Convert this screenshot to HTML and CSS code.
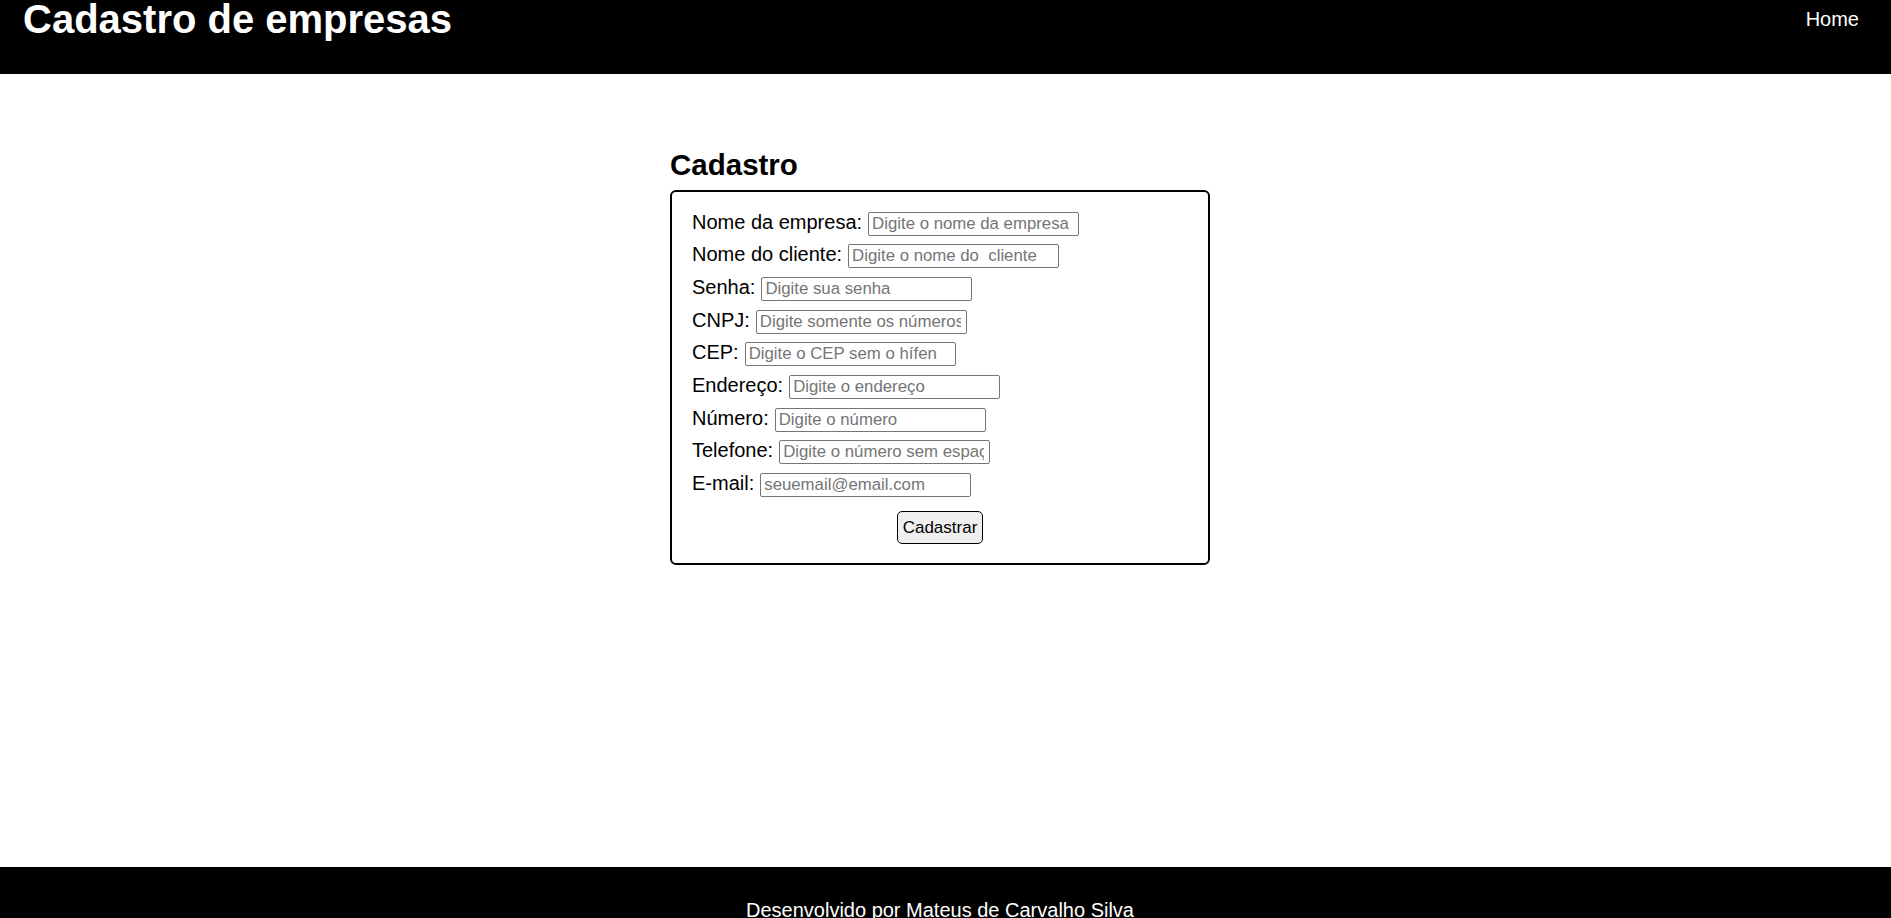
FILE: index.html
```html
<!DOCTYPE html>
<html lang="pt-BR">
<head>
    <meta charset="UTF-8">
    <meta name="viewport" content="width=device-width, initial-scale=1.0">
    <title>Cadastro de empresas</title>
    <link rel="stylesheet" href="styles.css">
</head>
<body>
    <header class="topo">
        <h1>Cadastro de empresas</h1>
        <nav>
            <a href="#">Home</a>
        </nav>
    </header>

    <main class="conteudo">
        <section class="cadastro">
            <h2>Cadastro</h2>
            <form class="formulario">
                <div class="campo">
                    <label for="empresa">Nome da empresa:</label>
                    <input type="text" id="empresa" placeholder="Digite o nome da empresa">
                </div>
                <div class="campo">
                    <label for="cliente">Nome do cliente:</label>
                    <input type="text" id="cliente" placeholder="Digite o nome do  cliente">
                </div>
                <div class="campo">
                    <label for="senha">Senha:</label>
                    <input type="password" id="senha" placeholder="Digite sua senha">
                </div>
                <div class="campo">
                    <label for="cnpj">CNPJ:</label>
                    <input type="text" id="cnpj" placeholder="Digite somente os números">
                </div>
                <div class="campo">
                    <label for="cep">CEP:</label>
                    <input type="text" id="cep" placeholder="Digite o CEP sem o hífen">
                </div>
                <div class="campo">
                    <label for="endereco">Endereço:</label>
                    <input type="text" id="endereco" placeholder="Digite o endereço">
                </div>
                <div class="campo">
                    <label for="numero">Número:</label>
                    <input type="text" id="numero" placeholder="Digite o número">
                </div>
                <div class="campo">
                    <label for="telefone">Telefone:</label>
                    <input type="text" id="telefone" placeholder="Digite o número sem espaços">
                </div>
                <div class="campo">
                    <label for="email">E-mail:</label>
                    <input type="email" id="email" placeholder="seuemail@email.com">
                </div>
                <button type="submit">Cadastrar</button>
            </form>
        </section>
    </main>

    <footer class="rodape">
        <p>Desenvolvido por Mateus de Carvalho Silva</p>
    </footer>
</body>
</html>
```

FILE: styles.css
```css
/* estilos gerais */
html, body {
    margin: 0;
    padding: 0;
    overflow: hidden;
}

body {
    font-family: "Liberation Sans", Arial, sans-serif;
    color: #000;
    background-color: #fff;
}

/* cabeçalho */
.topo {
    background-color: #000;
    height: 74px;
    display: flex;
    justify-content: space-between;
    align-items: flex-start;
}

.topo h1 {
    margin: 0 0 0 23px;
    font-size: 40px;
    line-height: 38px;
    color: #fff;
}

.topo nav a {
    display: block;
    margin: 8px 32px 0 0;
    font-size: 20px;
    color: #fff;
    text-decoration: none;
}

/* área principal */
.conteudo {
    height: 793px;
    box-sizing: border-box;
    padding: 74px 11px 0 0;
    display: flex;
    flex-direction: column;
    align-items: center;
}

.cadastro {
    width: 540px;
}

.cadastro h2 {
    margin: 0 0 7.5px 0;
    font-size: 29.5px;
}

.formulario {
    border: 2px solid #000;
    border-radius: 6px;
    padding: 19px 20px 19px 20px;
    display: flex;
    flex-direction: column;
    gap: 8.7px;
}

.campo {
    height: 24px;
    display: flex;
    align-items: baseline;
    gap: 6px;
}

.campo label {
    font-size: 20px;
    line-height: 23px;
}

.campo input {
    width: 211px;
    height: 24px;
    box-sizing: border-box;
    margin: 0;
    padding: 0 5px 0 3px;
    border: 1px solid #767676;
    border-radius: 2px;
    font-family: inherit;
    font-size: 16.8px;
}

.campo input::placeholder {
    color: #757575;
}

.formulario button {
    align-self: center;
    margin-top: 6.5px;
    height: 33px;
    padding: 0 5px;
    font-family: inherit;
    font-size: 17px;
    color: #000;
    background-color: #efefef;
    border: 1px solid #000;
    border-radius: 5px;
    cursor: pointer;
}

/* rodapé */
.rodape {
    background-color: #000;
    padding: 32px 11px 30px 0;
    text-align: center;
}

.rodape p {
    margin: 0;
    font-size: 20px;
    color: #fff;
}
```
